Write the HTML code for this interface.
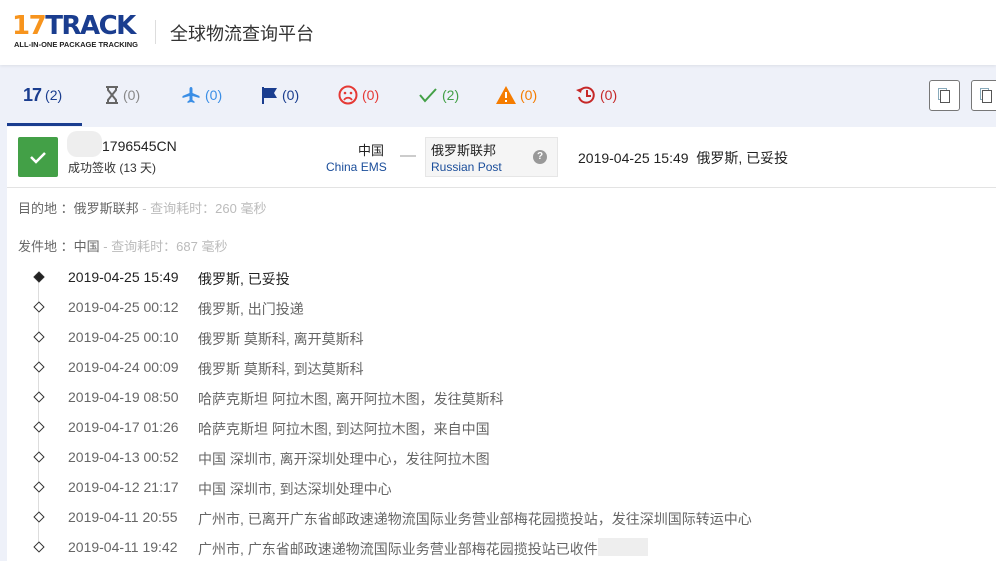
<!DOCTYPE html>
<html><head><meta charset="utf-8"><style>
*{margin:0;padding:0;box-sizing:border-box}
body{width:996px;height:561px;overflow:hidden;background:#eef1f9;font-family:"Liberation Sans","Noto Sans CJK SC",sans-serif;position:relative}
.hdr{position:absolute;left:0;top:0;width:996px;height:65px;background:#fff;box-shadow:0 1px 3px rgba(0,0,0,.08)}
.a{position:absolute;white-space:nowrap}
.tab{position:absolute;top:86px;font-size:14px;height:18px;display:flex;align-items:center;gap:4px}
.tab svg{display:block}
.main{position:absolute;left:7px;top:127px;width:989px;height:434px;background:#fff}
.btn{position:absolute;top:80px;width:31px;height:31px;border:1px solid #777;border-radius:3px;background:#fff}
.tl{position:absolute;font-size:14px;color:#666}
.dm{position:absolute;left:35px;width:8px;height:8px;border:1.5px solid #333;transform:rotate(45deg);background:#fff}
</style></head><body>
<div class="hdr">
 <div class="a" style="left:12px;top:11px;font-size:26px;font-weight:900;letter-spacing:-1.5px;font-family:'DejaVu Sans',sans-serif"><span style="color:#f7941d">17</span><span style="color:#1a3d8f">TRACK</span></div>
 <div class="a" style="left:14px;top:40px;font-size:7.5px;font-weight:bold;color:#222">ALL-IN-ONE PACKAGE TRACKING</div>
 <div class="a" style="left:155px;top:20px;width:1px;height:24px;background:#ddd"></div>
 <div class="a" style="left:170px;top:20px;font-size:18px;color:#333">全球物流查询平台</div>
</div>
<div class="tab" style="left:23px;color:#1a3d8f"><b style="font-size:18px;letter-spacing:-1px">17</b>(2)</div>
<div class="a" style="left:7px;top:123px;width:75px;height:3px;background:#1a3d8f"></div>
<div class="tab" style="left:105px;color:#888"><svg width="14" height="18" viewBox="0 0 14 18"><path d="M1 1h12M1 17h12M3 1v3l4 5-4 5v3M11 1v3L7 9l4 5v3" fill="none" stroke="#666" stroke-width="2"/></svg>(0)</div>
<div class="tab" style="left:181px;color:#3a8ee6"><svg width="20" height="18" viewBox="0 0 20 18"><path d="M10 1c1 0 1.5 1 1.5 2v4l7 3v2l-7-2v4l2 1.5V17L10 16l-3.5 1v-1.5l2-1.5v-4l-7 2v-2l7-3V3c0-1 .5-2 1.5-2z" fill="#3a8ee6"/></svg>(0)</div>
<div class="tab" style="left:262px;color:#1a3d8f"><svg width="16" height="18" viewBox="0 0 16 18"><path d="M1 1v17" stroke="#1a3d8f" stroke-width="2"/><path d="M2 2h13l-3 5 3 5H2z" fill="#1a3d8f"/></svg>(0)</div>
<div class="tab" style="left:338px;color:#e53935"><svg width="20" height="20" viewBox="0 0 20 20"><circle cx="10" cy="10" r="8.5" fill="none" stroke="#e53935" stroke-width="2"/><circle cx="7" cy="8" r="1.3" fill="#e53935"/><circle cx="13" cy="8" r="1.3" fill="#e53935"/><path d="M6 15c2-3 6-3 8 0" fill="none" stroke="#e53935" stroke-width="1.8"/></svg>(0)</div>
<div class="tab" style="left:418px;color:#43a047"><svg width="20" height="16" viewBox="0 0 20 16"><path d="M2 8l5 6L18 2" fill="none" stroke="#43a047" stroke-width="2"/></svg>(2)</div>
<div class="tab" style="left:496px;color:#f57c00"><svg width="20" height="18" viewBox="0 0 20 18"><path d="M10 0L20 18H0z" fill="#f57c00"/><path d="M10 6v6M10 14v2" stroke="#fff" stroke-width="2"/></svg>(0)</div>
<div class="tab" style="left:576px;color:#c62828"><svg width="20" height="20" viewBox="0 0 20 20"><path d="M4 6A7.5 7.5 0 1 1 3 12" fill="none" stroke="#c62828" stroke-width="2"/><path d="M0 5l5 3 1-5z" fill="#c62828"/><path d="M11 5v6h4" fill="none" stroke="#c62828" stroke-width="2"/></svg>(0)</div>
<div class="btn" style="left:929px"><div class="a" style="left:8px;top:7px;width:9px;height:12px;border:1px solid #8ab;"></div><div class="a" style="left:10px;top:9px;width:10px;height:13px;border:1px solid #555;background:#fff"></div></div>
<div class="btn" style="left:971px"><div class="a" style="left:8px;top:7px;width:9px;height:12px;border:1px solid #8ab;"></div><div class="a" style="left:10px;top:9px;width:10px;height:13px;border:1px solid #555;background:#fff"></div></div>
<div class="main"></div>
<div class="a" style="left:18px;top:137px;width:40px;height:40px;background:#43a047;border-radius:2px"><svg width="40" height="40"><path d="M13 20l5 5 9-9" fill="none" stroke="#fff" stroke-width="2.5"/></svg></div>
<div class="a" style="left:67px;top:131px;width:35px;height:26px;background:#eee;border-radius:10px"></div>
<div class="a" style="left:102px;top:138px;font-size:14px;color:#222">1796545CN</div>
<div class="a" style="left:68px;top:159px;font-size:12px;color:#333">成功签收 (13 天)</div>
<div class="a" style="left:358px;top:140px;font-size:13px;color:#222">中国</div>
<div class="a" style="left:326px;top:160px;font-size:12px;color:#1a4d9a">China EMS</div>
<div class="a" style="left:400px;top:155px;width:16px;height:2px;background:#ccc"></div>
<div class="a" style="left:425px;top:137px;width:133px;height:40px;background:#f5f5f5;border:1px solid #e6e6e6"></div>
<div class="a" style="left:431px;top:140px;font-size:13px;color:#222">俄罗斯联邦</div>
<div class="a" style="left:431px;top:160px;font-size:12px;color:#1a4d9a">Russian Post</div>
<div class="a" style="left:533px;top:150px;width:14px;height:14px;border-radius:7px;background:#999;color:#fff;font-size:10px;font-weight:bold;text-align:center;line-height:14px">?</div>
<div class="a" style="left:578px;top:148px;font-size:14px;color:#222">2019-04-25 15:49&nbsp; 俄罗斯, 已妥投</div>
<div class="a" style="left:7px;top:187px;width:989px;height:1px;background:#e3e3e3"></div>
<div class="a" style="left:18px;top:198px;font-size:13px;color:#666">目的地 ：俄罗斯联邦<span style="color:#bbb"> - 查询耗时：260 毫秒</span></div>
<div class="a" style="left:18px;top:236px;font-size:13px;color:#666">发件地 ：中国<span style="color:#bbb"> - 查询耗时：687 毫秒</span></div>
<div class="a" style="left:38px;top:282px;width:1px;height:270px;background:#ddd"></div>
<div class="dm" style="top:273px;background:#222"></div>
<div class="tl" style="left:68px;top:269px;color:#222">2019-04-25 15:49</div><div class="tl" style="left:198px;top:269px;color:#222">俄罗斯, 已妥投</div>
<div class="dm" style="top:303px"></div><div class="tl" style="left:68px;top:299px">2019-04-25 00:12</div><div class="tl" style="left:198px;top:299px">俄罗斯, 出门投递</div>
<div class="dm" style="top:333px"></div><div class="tl" style="left:68px;top:329px">2019-04-25 00:10</div><div class="tl" style="left:198px;top:329px">俄罗斯 莫斯科, 离开莫斯科</div>
<div class="dm" style="top:363px"></div><div class="tl" style="left:68px;top:359px">2019-04-24 00:09</div><div class="tl" style="left:198px;top:359px">俄罗斯 莫斯科, 到达莫斯科</div>
<div class="dm" style="top:393px"></div><div class="tl" style="left:68px;top:389px">2019-04-19 08:50</div><div class="tl" style="left:198px;top:389px">哈萨克斯坦 阿拉木图, 离开阿拉木图，发往莫斯科</div>
<div class="dm" style="top:423px"></div><div class="tl" style="left:68px;top:419px">2019-04-17 01:26</div><div class="tl" style="left:198px;top:419px">哈萨克斯坦 阿拉木图, 到达阿拉木图，来自中国</div>
<div class="dm" style="top:453px"></div><div class="tl" style="left:68px;top:449px">2019-04-13 00:52</div><div class="tl" style="left:198px;top:449px">中国 深圳市, 离开深圳处理中心，发往阿拉木图</div>
<div class="dm" style="top:483px"></div><div class="tl" style="left:68px;top:479px">2019-04-12 21:17</div><div class="tl" style="left:198px;top:479px">中国 深圳市, 到达深圳处理中心</div>
<div class="dm" style="top:513px"></div><div class="tl" style="left:68px;top:509px">2019-04-11 20:55</div><div class="tl" style="left:198px;top:509px">广州市, 已离开广东省邮政速递物流国际业务营业部梅花园揽投站，发往深圳国际转运中心</div>
<div class="dm" style="top:543px"></div><div class="tl" style="left:68px;top:539px">2019-04-11 19:42</div><div class="tl" style="left:198px;top:539px">广州市, 广东省邮政速递物流国际业务营业部梅花园揽投站已收件</div>
<div class="a" style="left:598px;top:538px;width:50px;height:18px;background:#eee"></div>
</body></html>
